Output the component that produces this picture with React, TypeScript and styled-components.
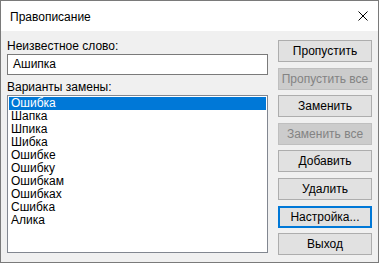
import React from "react";
import styled, { createGlobalStyle } from "styled-components";

const Global = createGlobalStyle`
  html, body { margin: 0; padding: 0; background: #ffffff; }
  * { box-sizing: border-box; }
`;

const Window = styled.div`
  width: 379px;
  height: 263px;
  border: 1px solid #7a7a7a;
  background: #f0f0f0;
  display: flex;
  flex-direction: column;
  font-family: "Liberation Sans", Arial, sans-serif;
  font-size: 12px;
  color: #000;
`;

const TitleBar = styled.div`
  height: 30px;
  background: #ffffff;
  display: flex;
  align-items: center;
  justify-content: space-between;
  padding: 0 10px 0 9px;
`;

const Title = styled.span`
  font-size: 12px;
  margin-top: 1px;
`;

const Close = styled.svg`
  width: 10px;
  height: 10px;
  margin-right: 0px;
`;

const Body = styled.div`
  flex: 1;
  display: flex;
  padding: 8px 6px 0 6px;
  gap: 10px;
`;

const LeftCol = styled.div`
  width: 261px;
  display: flex;
  flex-direction: column;
`;

const Label = styled.div<{ $top?: number }>`
  line-height: 15px;
  height: 15px;
  margin-top: ${(p) => p.$top ?? 0}px;
`;

const Input = styled.div`
  height: 21px;
  border: 1px solid #7a7a7a;
  background: #fff;
  padding: 0 5px;
  line-height: 19px;
`;

const List = styled.div`
  height: 158px;
  border: 1px solid #828790;
  background: #fff;
  padding: 1px;
`;

const Item = styled.div<{ $sel?: boolean }>`
  height: 13px;
  line-height: 13px;
  padding-left: 2px;
  background: ${(p) => (p.$sel ? "#0078d7" : "transparent")};
  color: ${(p) => (p.$sel ? "#fff" : "#000")};
`;

const RightCol = styled.div`
  width: 94px;
  display: flex;
  flex-direction: column;
  gap: 5.6px;
  padding-top: 1px;
`;

const Button = styled.div<{ $disabled?: boolean; $default?: boolean }>`
  height: 22px;
  flex: none;
  display: flex;
  align-items: center;
  justify-content: center;
  background: ${(p) => (p.$disabled ? "#cccccc" : "#e1e1e1")};
  border: ${(p) =>
    p.$default ? "2px solid #0078d7" : p.$disabled ? "1px solid #bfbfbf" : "1px solid #adadad"};
  color: ${(p) => (p.$disabled ? "#838383" : "#000")};
`;

const items = [
  "Ошибка",
  "Шапка",
  "Шпика",
  "Шибка",
  "Ошибке",
  "Ошибку",
  "Ошибкам",
  "Ошибках",
  "Сшибка",
  "Алика",
];

export default function App() {
  return (
    <>
      <Global />
      <Window>
        <TitleBar>
          <Title>Правописание</Title>
          <Close viewBox="0 0 10 10">
            <path d="M0.5 0.5 L9.5 9.5 M9.5 0.5 L0.5 9.5" stroke="#000" strokeWidth="1" />
          </Close>
        </TitleBar>
        <Body>
          <LeftCol>
            <Label>Неизвестное слово:</Label>
            <Input>Ашипка</Input>
            <Label $top={5}>Варианты замены:</Label>
            <List>
              {items.map((it, i) => (
                <Item key={it} $sel={i === 0}>
                  {it}
                </Item>
              ))}
            </List>
          </LeftCol>
          <RightCol>
            <Button>Пропустить</Button>
            <Button $disabled>Пропустить все</Button>
            <Button>Заменить</Button>
            <Button $disabled>Заменить все</Button>
            <Button>Добавить</Button>
            <Button>Удалить</Button>
            <Button $default>Настройка...</Button>
            <Button>Выход</Button>
          </RightCol>
        </Body>
      </Window>
    </>
  );
}
